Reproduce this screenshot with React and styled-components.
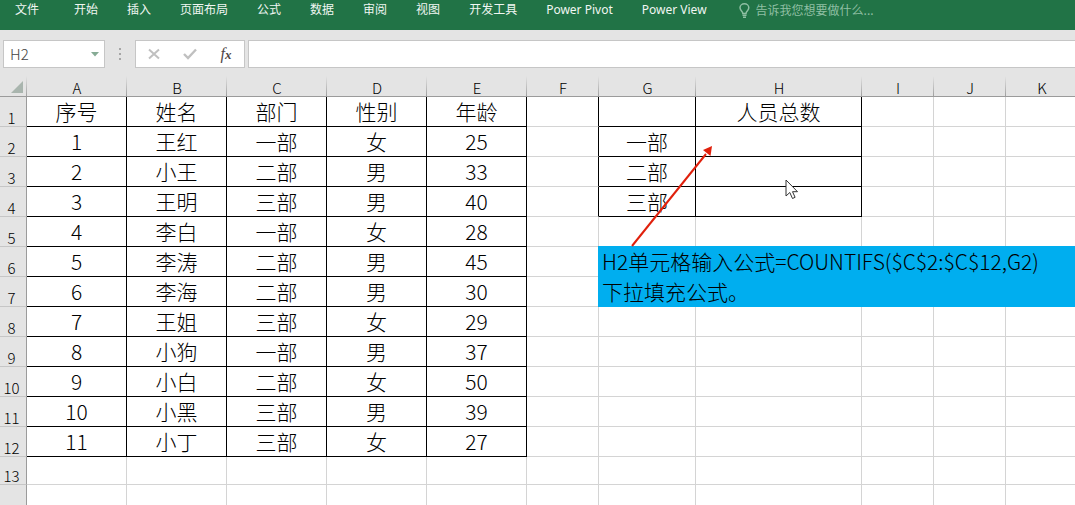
import React from 'react'
import styled, { createGlobalStyle } from 'styled-components'

const columns = [
  { name: 'A', width: 100 },
  { name: 'B', width: 100 },
  { name: 'C', width: 100 },
  { name: 'D', width: 100 },
  { name: 'E', width: 100 },
  { name: 'F', width: 72 },
  { name: 'G', width: 97 },
  { name: 'H', width: 166 },
  { name: 'I', width: 72 },
  { name: 'J', width: 72 },
  { name: 'K', width: 72 },
]

const rows = [
  ['序号', '姓名', '部门', '性别', '年龄', '', '', '人员总数'],
  ['1', '王红', '一部', '女', '25', '', '一部'],
  ['2', '小王', '二部', '男', '33', '', '二部'],
  ['3', '王明', '三部', '男', '40', '', '三部'],
  ['4', '李白', '一部', '女', '28'],
  ['5', '李涛', '二部', '男', '45'],
  ['6', '李海', '二部', '男', '30'],
  ['7', '王姐', '三部', '女', '29'],
  ['8', '小狗', '一部', '男', '37'],
  ['9', '小白', '二部', '女', '50'],
  ['10', '小黑', '三部', '男', '39'],
  ['11', '小丁', '三部', '女', '27'],
  [],
  [],
]

const tabs = ['开始', '插入', '页面布局', '公式', '数据', '审阅', '视图', '开发工具', 'Power Pivot', 'Power View']

// the two bordered ranges are A1:E12 and G1:H4
const blackRight = (r, c) => (r < 12 && c < 5) || (r < 4 && c >= 5 && c <= 7)
const blackBottom = (r, c) => (r < 12 && c < 5) || (r < 4 && (c === 6 || c === 7))

const Ribbon = () => (
  <RibbonBar>
    <FileTab type="button">文件</FileTab>
    <Tabs>
      {tabs.map((tab) => <Tab type="button" key={tab}>{tab}</Tab>)}
    </Tabs>
    <TellMe>
      <svg width="11" height="15" viewBox="0 0 11 15" fill="none" stroke="#8fbfa3" strokeWidth="1.5">
        <path d="M3.800 10.500C3.800 8.300 1 7.600 1 4.800a4.400 4 0 0 1 8.800 0C9.800 7.600 7 8.300 7 10.500z" />
        <path d="M3.500 12.300h4M4 14.200h3" />
      </svg>
      <TellMeInput aria-label="告诉我您想要做什么" placeholder="告诉我您想要做什么..." />
    </TellMe>
  </RibbonBar>
)

const FormulaBar = () => (
  <FormulaRow>
    <NameBox>
      <NameInput aria-label="名称框" defaultValue="H2" />
      <IconButton type="button" aria-label="打开名称列表" $width={18}>
        <svg width="8" height="5" viewBox="0 0 8 5"><path d="M0 0h8L4 4.500z" fill="#86ab95" /></svg>
      </IconButton>
    </NameBox>
    <Grip>
      <svg width="3" height="12" viewBox="0 0 3 12" fill="#a6a6a6">
        <path d="M0 0h2v2H0zM0 5h2v2H0zM0 10h2v2H0z" />
      </svg>
    </Grip>
    <Actions>
      <IconButton type="button" aria-label="取消" $width={36}>
        <svg width="12" height="12" viewBox="0 0 12 12" fill="none" stroke="#c0c0c0" strokeWidth="2">
          <path d="M1 1.500l10 9M11 1.500l-10 9" />
        </svg>
      </IconButton>
      <IconButton type="button" aria-label="输入" $width={36}>
        <svg width="14" height="12" viewBox="0 0 14 12" fill="none" stroke="#c0c0c0" strokeWidth="2.400">
          <path d="M1 6l4 4L13 1.500" />
        </svg>
      </IconButton>
      <IconButton type="button" aria-label="插入函数" $width={36}>
        <Fx>f<sub>x</sub></Fx>
      </IconButton>
    </Actions>
    <FormulaInput aria-label="编辑栏" />
  </FormulaRow>
)

const Sheet = () => (
  <SheetArea>
    <Grid>
      <colgroup>
        <col width="27" />
        {columns.map((col) => <col key={col.name} width={col.width} />)}
        <col />
      </colgroup>
      <thead>
        <tr>
          <Corner>
            <svg width="12" height="12" viewBox="0 0 12 12"><path d="M12 0v12H0z" fill="#a9b5ae" /></svg>
          </Corner>
          {columns.map((col) => <ColumnHead key={col.name} scope="col">{col.name}</ColumnHead>)}
          <ColumnHead />
        </tr>
      </thead>
      <tbody>
        {rows.map((row, r) => (
          <tr key={r}>
            <RowHead scope="row" $height={r < 12 ? 30 : 28}>{r < 13 ? r + 1 : ''}</RowHead>
            {columns.map((col, c) => (
              <Cell key={col.name} $right={blackRight(r, c)} $bottom={blackBottom(r, c)}>{row[c]}</Cell>
            ))}
            <Cell />
          </tr>
        ))}
      </tbody>
    </Grid>
    <Note>
      H2单元格输入公式=COUNTIFS($C$2:$C$12,G2)<br />
      下拉填充公式。
    </Note>
    <Arrow width="84" height="104" viewBox="0 0 84 104">
      <path d="M2 102L76 10" stroke="#e0200c" strokeWidth="2" />
      <path d="M82 2L80.500 12L73 6z" fill="#e0200c" />
    </Arrow>
    <Pointer width="14" height="21" viewBox="0 0 14 21">
      <path d="M1 1v16l3.800-3.500L7.500 19.500l2.600-1.200-2.600-5.600H12.500z" fill="#fff" stroke="#333" />
    </Pointer>
  </SheetArea>
)

const App = () => {
  return (
    <Window>
      <GlobalStyle />
      <Ribbon />
      <FormulaBar />
      <Sheet />
    </Window>
  )
}

export default App

const GlobalStyle = createGlobalStyle`
  * {
    box-sizing: border-box;
  }
  body {
    margin: 0;
    background: #fff;
  }
  body, button, input {
    font-family: "Noto Sans CJK SC", "Noto Sans", sans-serif;
  }
`

const Window = styled.div`
  height: 100vh;
  display: flex;
  flex-direction: column;
  overflow: hidden;
`

const RibbonBar = styled.header`
  display: flex;
  align-items: flex-start;
  height: 30px;
  flex-shrink: 0;
  padding-left: 15px;
  background: #217346;
`

const Tab = styled.button`
  padding: 0;
  border: none;
  background: none;
  color: #f0f6f2;
  font-family: "Noto Sans", "Noto Sans CJK SC", sans-serif;
  font-size: 12px;
  line-height: 20px;
  white-space: nowrap;
  cursor: pointer;
`

const FileTab = styled(Tab)`
  margin-right: 35px;
`

const Tabs = styled.nav`
  display: flex;
  gap: 29px;
`

const TellMe = styled.label`
  display: flex;
  align-items: center;
  gap: 6px;
  height: 20px;
  margin-left: 32px;
`

const TellMeInput = styled.input`
  width: 160px;
  padding: 0;
  border: none;
  outline: none;
  background: none;
  color: #fff;
  font-size: 12px;
  line-height: 20px;

  &::placeholder {
    color: #8fbfa3;
    opacity: 1;
  }
`

const FormulaRow = styled.div`
  display: flex;
  align-items: stretch;
  height: 46px;
  flex-shrink: 0;
  padding: 10px 0 8px 3px;
  background: #e4e4e4;
`

const NameBox = styled.div`
  display: flex;
  width: 102px;
  border: 1px solid #c6c6c6;
  background: #fff;
`

const NameInput = styled.input`
  flex: 1;
  min-width: 0;
  padding: 0 0 2px 6px;
  border: none;
  outline: none;
  background: none;
  color: #444;
  font-size: 15px;
  font-weight: 300;
`

const IconButton = styled.button`
  display: flex;
  align-items: center;
  justify-content: center;
  width: ${({ $width }) => $width}px;
  padding: 0;
  border: none;
  background: none;
  cursor: pointer;
`

const Grip = styled.div`
  display: flex;
  align-items: center;
  justify-content: center;
  width: 30px;
`

const Actions = styled.div`
  display: flex;
  width: 110px;
  margin-right: 3px;
  border: 1px solid #c6c6c6;
  background: #fff;
`

const Fx = styled.span`
  font-family: "Liberation Serif", serif;
  font-style: italic;
  font-size: 16px;
  line-height: 16px;
  color: #4f4646;

  sub {
    font-size: 13px;
    font-weight: bold;
    line-height: 0;
    vertical-align: baseline;
  }
`

const FormulaInput = styled.input`
  flex: 1;
  min-width: 0;
  padding: 0 8px;
  border: 1px solid #c6c6c6;
  border-right: none;
  border-radius: 0;
  outline: none;
  background: #fff;
  font-size: 15px;
`

const SheetArea = styled.main`
  position: relative;
  flex: 1;
  min-height: 0;
  overflow: hidden;
`

const Grid = styled.table`
  width: 100%;
  min-width: 1076px;
  table-layout: fixed;
  border-collapse: separate;
  border-spacing: 0;
  font-weight: 300;
  color: #000;
`

/* the separators between column letters fade out towards the top */
const separator = 'linear-gradient(to bottom, #e4e4e4, #a0a0a0) right / 1px 100% no-repeat #e4e4e4'

const Corner = styled.td`
  height: 21px;
  padding: 0 4px 3px 0;
  border-bottom: 1px solid #9b9b9b;
  background: ${separator};
  text-align: right;
  vertical-align: bottom;
  line-height: 0;
`

const ColumnHead = styled.th`
  height: 21px;
  padding: 4px 0 0;
  border-bottom: 1px solid #9b9b9b;
  background: ${separator};
  font-size: 15px;
  font-weight: 300;
  line-height: 16px;
`

const RowHead = styled.th`
  height: ${({ $height }) => $height}px;
  padding: 0 3px 0 0;
  border-right: 1px solid #9b9b9b;
  border-bottom: 1px solid #c6c6c6;
  background: #e4e4e4;
  font-size: 15px;
  font-weight: 300;
  line-height: 16px;
  vertical-align: bottom;
`

const Cell = styled.td`
  padding: 0 0 2px;
  border-right: 1px solid ${({ $right }) => ($right ? '#000' : '#d4d4d4')};
  border-bottom: 1px solid ${({ $bottom }) => ($bottom ? '#000' : '#d4d4d4')};
  font-size: 21px;
  line-height: 24px;
  text-align: center;
`

/* floating shapes drawn over the cells */
const Note = styled.div`
  position: absolute;
  top: 170px;
  left: 598px;
  right: 0;
  padding: 0 4px 1px;
  background: #00aeef;
  color: #000;
  font-size: 21px;
  font-weight: 300;
  line-height: 30px;
  white-space: nowrap;
`

const Arrow = styled.svg`
  position: absolute;
  top: 68px;
  left: 630px;
`

const Pointer = styled.svg`
  position: absolute;
  top: 103px;
  left: 785px;
`
